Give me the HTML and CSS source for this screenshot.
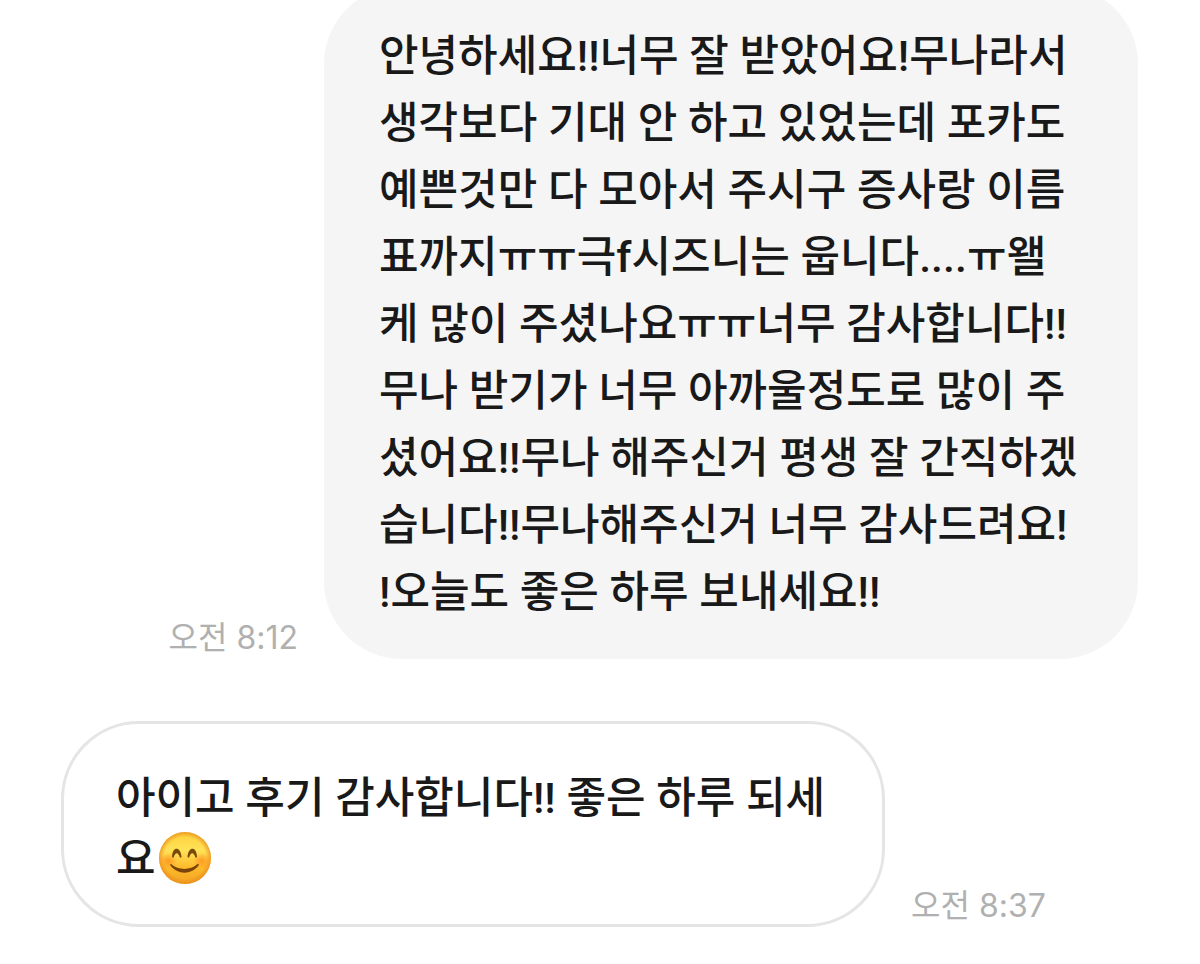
FILE: index.html
```html
<!DOCTYPE html>
<html lang="ko">
<head>
    <meta charset="UTF-8">
    <meta name="viewport" content="width=device-width, initial-scale=1.0">
    <title>채팅</title>
    <link rel="stylesheet" href="styles.css">
</head>
<body>
    <main class="chat">
        <div class="message sent">
            <time class="time" datetime="08:12">오전 8:12</time>
            <p class="bubble">
                안녕하세요!!너무 잘 받았어요!무나라서<br>
                생각보다 기대 안 하고 있었는데 포카도<br>
                예쁜것만 다 모아서 주시구 증사랑 이름<br>
                표까지ㅠㅠ극f시즈니는 웁니다....ㅠ왤<br>
                케 많이 주셨나요ㅠㅠ너무 감사합니다!!<br>
                무나 받기가 너무 아까울정도로 많이 주<br>
                셨어요!!무나 해주신거 평생 잘 간직하겠<br>
                습니다!!무나해주신거 너무 감사드려요!<br>
                !오늘도 좋은 하루 보내세요!!
            </p>
        </div>

        <div class="message received">
            <p class="bubble">
                아이고 후기 감사합니다!! 좋은 하루 되세<br>
                요<svg class="emoji" viewBox="0 0 52 52" role="img" aria-label="미소">
                    <defs>
                        <linearGradient id="face" x1="0" y1="0" x2="0" y2="1">
                            <stop offset="0" stop-color="#fdd03a"/>
                            <stop offset="0.35" stop-color="#ffe257"/>
                            <stop offset="0.7" stop-color="#fdb92a"/>
                            <stop offset="1" stop-color="#f2a324"/>
                        </linearGradient>
                        <radialGradient id="edge">
                            <stop offset="0.8" stop-color="#e98a1c" stop-opacity="0"/>
                            <stop offset="1" stop-color="#e98a1c" stop-opacity="0.75"/>
                        </radialGradient>
                        <radialGradient id="cheek">
                            <stop offset="0" stop-color="#ff8a1c" stop-opacity="0.75"/>
                            <stop offset="1" stop-color="#ff8a1c" stop-opacity="0"/>
                        </radialGradient>
                    </defs>
                    <circle cx="26" cy="26" r="26" fill="url(#face)"/>
                    <circle cx="26" cy="26" r="26" fill="url(#edge)"/>
                    <ellipse cx="9" cy="29" rx="9" ry="8" fill="url(#cheek)"/>
                    <ellipse cx="43" cy="29" rx="9" ry="8" fill="url(#cheek)"/>
                    <path d="M13 24.500C13.500 14 21.500 14 22.500 24.500C22.500 26 21.300 26 20.700 25C19 20 16.500 20 14.800 25C14.200 26 13 26 13 24.500ZM28.500 24.500C29.500 14 37.500 14 38 24.500C38 26 36.800 26 36.200 25C34.500 20 32 20 30.300 25C29.700 26 28.500 26 28.500 24.500Z" fill="#7a4a0c"/>
                    <path d="M12 32C20 38.500 31 38.500 38.500 32C39.500 31.500 40 32.500 39.500 33.500C33 43 18 43 11.500 33.500C11 32.500 11.300 31.700 12 32Z" fill="#7a4308"/>
                </svg>
            </p>
            <time class="time" datetime="08:37">오전 8:37</time>
        </div>
    </main>
</body>
</html>
```
FILE: styles.css
```css
body {
    margin: 0;
    background: #fff;
    color: #191919;
    font-family: Roboto, "Noto Sans CJK KR", sans-serif;
}
.chat {
    display: flex;
    flex-direction: column;
    gap: 62px;
    padding: 0 62px 36px 61px;
}
.message {
    display: flex;
    align-items: flex-end;
    gap: 26px;
}
.sent {
    justify-content: flex-end;
}
.bubble {
    box-sizing: border-box;
    margin: 0;
    border-radius: 78px;
    font-size: 43px;
    font-weight: 500;
    white-space: nowrap;
}
.sent .bubble {
    width: 814px;
    margin-top: -14px;
    padding: 37px 55px 33px;
    background: #f5f5f5;
    line-height: 67px;
}
.received .bubble {
    width: 824px;
    padding: 44px 52px 34px;
    border: 3px solid #e5e5e5;
    line-height: 61px;
}
.time {
    color: #b0b0b0;
    font-family: Inter, "Noto Sans CJK KR", sans-serif;
    font-size: 32px;
    line-height: 42px;
}
.emoji {
    width: 52px;
    height: 52px;
    margin-left: 3px;
    vertical-align: -10px;
}
```
